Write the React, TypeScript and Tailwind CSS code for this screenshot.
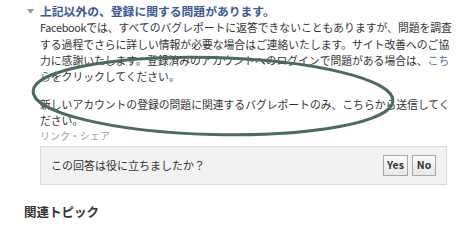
import React from 'react';

const lineCls = 'whitespace-nowrap';

export default function App() {
  return (
    <div className="relative w-[460px] h-[220px] overflow-hidden bg-white font-['Noto_Sans_CJK_JP',sans-serif] text-[#333333]">
      <div className="pl-[24px] pt-[3px]">
        <div className="flex">
          <div className="w-[16px] pt-[6px] pl-[3px]">
            <svg width="7" height="5" viewBox="0 0 7 5">
              <path d="M0 0 L7 0 L3.5 5 Z" fill="#9a9a9a" />
            </svg>
          </div>
          <div className="flex-1">
            <div className="text-[11.8px] leading-[16.3px] font-bold text-[#3b5998] whitespace-nowrap">
              上記以外の、登録に関する問題があります。
            </div>
            <div className="text-[10.8px] leading-[16.3px]">
              <div className={lineCls}>
                <span className="tracking-[-0.3px]">Facebook</span>では、すべてのバグレポートに返答できないこともありますが、問題を調査
              </div>
              <div className={lineCls}>
                する過程でさらに詳しい情報が必要な場合はご連絡いたします。サイト改善へのご協
              </div>
              <div className={lineCls}>
                力に感謝いたします。登録済みのアカウントへのログインで問題がある場合は、<span className="text-[#4f6aa3]">こち</span>
              </div>
              <div className={lineCls}>
                <span className="text-[#4f6aa3]">ら</span>をクリックしてください。
              </div>
              <div className={`${lineCls} mt-[12px]`}>
                新しいアカウントの登録の問題に関連するバグレポートのみ、こちらから送信してく
              </div>
              <div className={`${lineCls} leading-[14px]`}>ださい。</div>
            </div>
            <div className="text-[10px] leading-[12px] text-[#a0a0a0] mt-[3px]">リンク・シェア</div>
            <div className="mt-[4px] mr-[13px] h-[39px] flex items-center justify-between bg-[#f2f2f2] border border-[#d9d9d9] pl-[10px] pr-[10px]">
              <span className="text-[11px]">この回答は役に立ちましたか？</span>
              <div className="flex gap-[4px]">
                <button className="h-[21px] w-[25px] text-[10.5px] font-bold text-[#333] border border-[#a8a8a8] bg-gradient-to-b from-[#fbfbfb] to-[#e6e6e6] leading-none">
                  Yes
                </button>
                <button className="h-[21px] w-[24px] text-[10.5px] font-bold text-[#333] border border-[#a8a8a8] bg-gradient-to-b from-[#fbfbfb] to-[#e6e6e6] leading-none">
                  No
                </button>
              </div>
            </div>
          </div>
        </div>
        <div className="mt-[19px] text-[12.5px] leading-[15px] font-bold text-[#333]">関連トピック</div>
      </div>

      {/* hand-drawn annotation ring */}
      <svg className="absolute inset-0 pointer-events-none" width="460" height="220" viewBox="0 0 460 220">
        <ellipse cx="213" cy="96" rx="180" ry="38.5" fill="none" stroke="#4a6b62" strokeWidth="3" transform="rotate(1.5 213 96)" />
      </svg>
    </div>
  );
}
